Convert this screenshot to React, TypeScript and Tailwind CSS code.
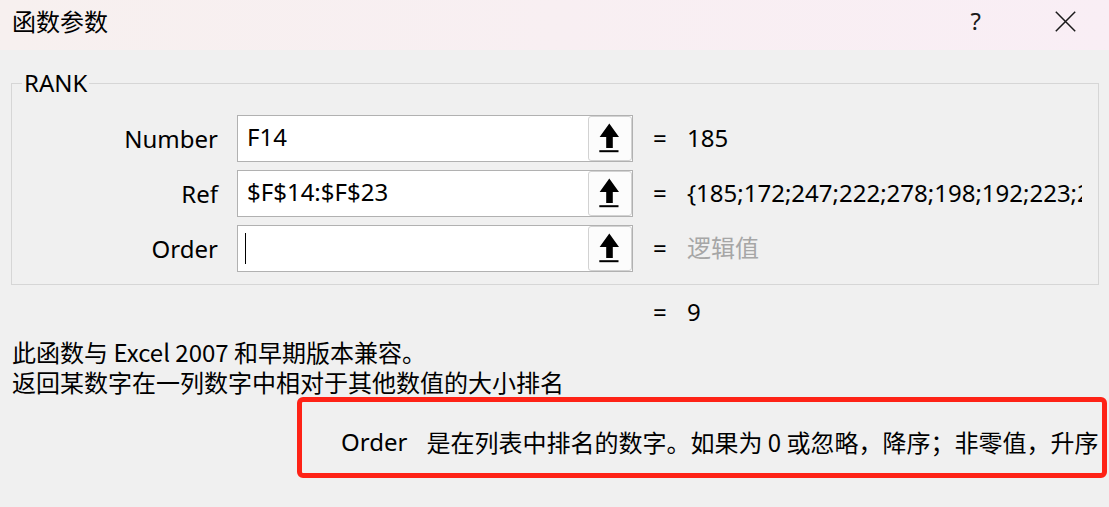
import React from "react";

function PickButton() {
  return (
    <div className="h-full w-[44px] shrink-0 rounded-[3px] border border-[#d2d2d2] bg-[#fcfcfc] flex items-center justify-center">
      <svg width="42" height="43" viewBox="0 0 42 43">
        <polygon points="20.3,6.5 30,20 23.8,20 23.8,31 17.2,31 17.2,20 10.6,20" fill="#000" />
        <rect x="10.3" y="33.2" width="19.2" height="2" fill="#000" />
      </svg>
    </div>
  );
}

function Row({
  label,
  value,
  result,
  muted,
  caret,
  clip,
}: {
  label: string;
  value?: string;
  result: string;
  muted?: boolean;
  caret?: boolean;
  clip?: boolean;
}) {
  let cls = "w-[395px] whitespace-nowrap leading-[30px] pb-[2px]";
  if (clip) cls = "w-[395px] overflow-hidden whitespace-nowrap leading-[30px] pb-[2px]";
  if (muted) cls = "w-[395px] whitespace-nowrap leading-[30px] pb-[2px] text-[#a6a6a6]";
  return (
    <div className="flex h-[47px] items-center">
      <div className="w-[206px] text-right leading-[30px]">{label}</div>
      <div className="ml-[19px] flex h-[47px] w-[396px] items-stretch border border-[#b1b1b1] bg-white">
        <div className="flex flex-1 items-center pl-[9px] leading-[30px] pb-[3px]">
          {caret ? <div className="ml-[-2px] mt-[3px] h-[31px] w-px bg-black" /> : value}
        </div>
        <PickButton />
      </div>
      <div className="ml-[20px] w-[34px] leading-[30px] pb-[2px]">=</div>
      <div className={cls}>{result}</div>
    </div>
  );
}

export default function App() {
  return (
    <div className="h-[507px] w-[1109px] overflow-hidden bg-[#f0f0f0] text-[24px] text-black font-['Noto_Sans','Noto_Sans_CJK_SC',sans-serif]">
      <div className="flex h-[50px] items-center bg-linear-to-r from-[#f7f0ef] to-[#f9eef5] pb-[8px] pl-[12px] pr-[33px]">
        <div className="leading-[30px] font-['Noto_Sans_CJK_SC',sans-serif]">函数参数</div>
        <div className="ml-auto flex items-center">
          <div className="leading-[30px] text-[#1a1a1a]">?</div>
          <svg className="ml-[74px]" width="21" height="21" viewBox="0 0 21 21">
            <path d="M0.8 0.8 L20.2 20.2 M20.2 0.8 L0.8 20.2" stroke="#1a1a1a" strokeWidth="1.5" />
          </svg>
        </div>
      </div>

      <fieldset className="ml-[11px] mr-[10px] mt-[21px] border border-[#d6d6d6] pb-[12px] pt-[20px]">
        <legend className="ml-[10px] px-[2px] leading-[24px]">RANK</legend>
        <div className="flex flex-col gap-[8px]">
          <Row label="Number" value="F14" result="185" />
          <Row label="Ref" value="$F$14:$F$23" result="{185;172;247;222;278;198;192;223;256;214}" clip />
          <Row label="Order" caret result="逻辑值" muted />
        </div>
      </fieldset>

      <div className="mt-[12px] flex h-[30px] items-center pl-[653px] leading-[30px]">
        <span className="w-[34px]">=</span>
        <span>9</span>
      </div>

      <div className="mt-[10px] pl-[12px] leading-[30px] font-['Noto_Sans_CJK_SC',sans-serif]">
        <div>此函数与 Excel 2007 和早期版本兼容。</div>
        <div>返回某数字在一列数字中相对于其他数值的大小排名</div>
      </div>

      <div className="ml-[297px] flex h-[81px] w-[810px] items-center whitespace-nowrap rounded-[6px] border-[5px] border-[#fe2216] pl-[39px] pt-[8px] leading-[30px]">
        <span>Order</span>
        <span className="ml-[19px] font-['Noto_Sans_CJK_SC',sans-serif]">是在列表中排名的数字。如果为 0 或忽略，降序；非零值，升序</span>
      </div>
    </div>
  );
}
